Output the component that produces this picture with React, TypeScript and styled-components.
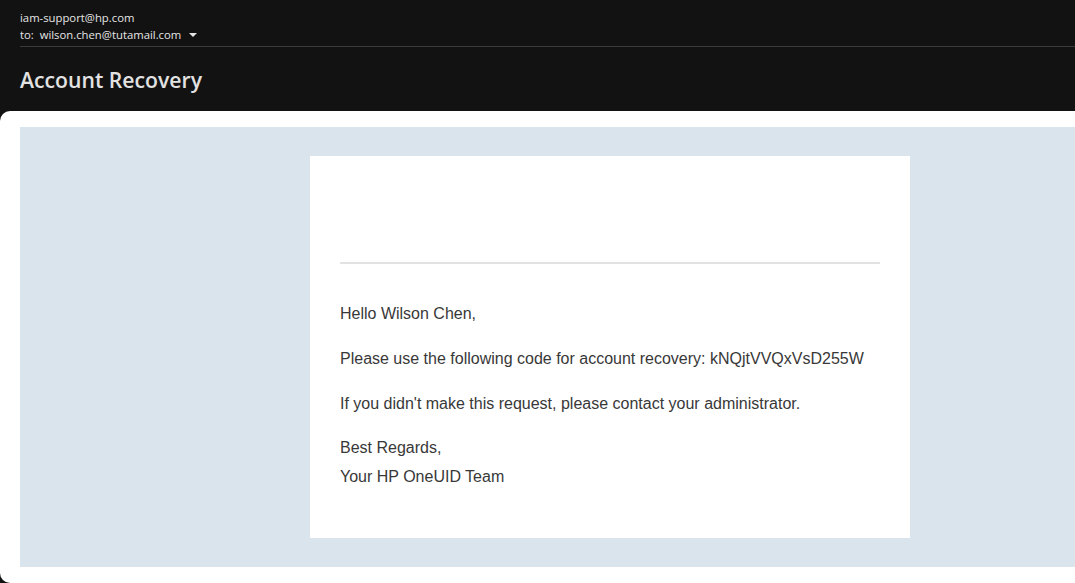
import React from "react";
import styled, { createGlobalStyle } from "styled-components";

const Global = createGlobalStyle`
  html, body { margin: 0; padding: 0; background: #121212; overflow: hidden; }
  body { width: 1075px; height: 583px; }
`;

const Page = styled.div`
  width: 1075px;
  height: 583px;
  background: #121212;
  display: flex;
  flex-direction: column;
  overflow: hidden;
`;

const Header = styled.header`
  padding: 9px 0 0 20px;
  height: 111px;
  box-sizing: border-box;
  display: flex;
  flex-direction: column;
  font-family: "Open Sans", "Noto Sans", sans-serif;
  color: #e6e6e6;
`;

const MetaLine = styled.div`
  font-size: 11.3px;
  line-height: 17px;
  display: flex;
  align-items: center;
`;

const Caret = styled.span`
  display: inline-block;
  margin-left: 8px;
  width: 0;
  height: 0;
  border-left: 4px solid transparent;
  border-right: 4px solid transparent;
  border-top: 4px solid #e6e6e6;
`;

const Rule = styled.div`
  height: 1px;
  background: #3a3a3a;
  margin-top: 3px;
`;

const Subject = styled.h1`
  margin: 18px 0 0;
  font-size: 21.2px;
  line-height: 30px;
  font-weight: 600;
  color: #e2e2e2;
`;

const Panel = styled.main`
  flex: 1;
  background: #ffffff;
  border-radius: 10px 0 0 10px;
  padding: 16px 0 0 20px;
  overflow: hidden;
`;

const Canvas = styled.div`
  width: 1180px;
  height: 440px;
  background: #dae4ed;
  padding-top: 29px;
  box-sizing: border-box;
  display: flex;
  justify-content: center;
  align-items: flex-start;
`;

const Card = styled.div`
  width: 600px;
  height: 382px;
  background: #ffffff;
  padding: 106px 30px 0;
  box-sizing: border-box;
  font-family: "Liberation Sans", Arial, sans-serif;
  color: #383838;
`;

const Divider = styled.hr`
  border: none;
  height: 2px;
  background: #e2e2e2;
  margin: 0 0 36px;
`;

const Para = styled.p`
  margin: 0 0 16px;
  font-size: 16px;
  line-height: 28.8px;
`;

export default function App() {
  return (
    <>
      <Global />
      <Page>
        <Header>
          <MetaLine>iam-support@hp.com</MetaLine>
          <MetaLine>
            to:&nbsp; wilson.chen@tutamail.com
            <Caret />
          </MetaLine>
          <Rule />
          <Subject>Account Recovery</Subject>
        </Header>
        <Panel>
          <Canvas>
            <Card>
              <Divider />
              <Para>Hello Wilson Chen,</Para>
              <Para>Please use the following code for account recovery: kNQjtVVQxVsD255W</Para>
              <Para>If you didn't make this request, please contact your administrator.</Para>
              <Para>
                Best Regards,
                <br />
                Your HP OneUID Team
              </Para>
            </Card>
          </Canvas>
        </Panel>
      </Page>
    </>
  );
}
